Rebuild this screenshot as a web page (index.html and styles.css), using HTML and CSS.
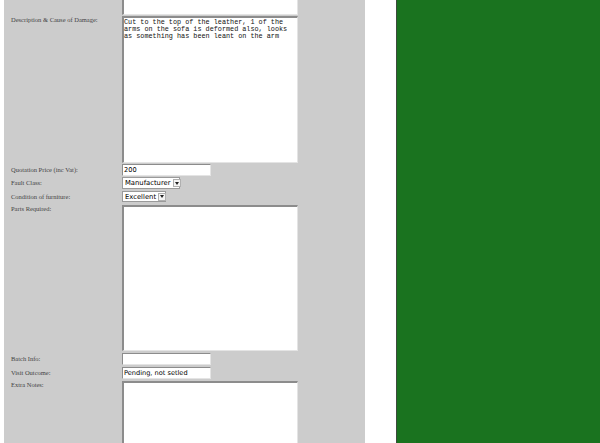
FILE: index.html
```html
<!DOCTYPE html>
<html>
<head>
<meta charset="utf-8">
<link rel="stylesheet" href="styles.css">
</head>
<body>
<div class="page">
  <div class="panel">
    <div class="row r-top">
      <div class="label"></div>
      <div class="area area-top"></div>
    </div>
    <div class="row r-gap1">
      <div class="label label-top">Description &amp; Cause of Damage:</div>
      <div class="area area-desc">Cut to the top of the leather, 1 of the
arms on the sofa is deformed also, looks
as something has been leant on the arm</div>
    </div>
    <div class="row r-gap1">
      <div class="label">Quotation Price (inc Vat):</div>
      <div class="input">200</div>
    </div>
    <div class="row">
      <div class="label">Fault Class:</div>
      <div class="select sel-fault"><span class="sel-text">Manufacturer</span><span class="sel-btn"><span class="tri"></span></span></div>
    </div>
    <div class="row">
      <div class="label">Condition of furniture:</div>
      <div class="select sel-cond"><span class="sel-text">Excellent</span><span class="sel-btn"><span class="tri"></span></span></div>
    </div>
    <div class="row">
      <div class="label label-top">Parts Required:</div>
      <div class="area area-parts"></div>
    </div>
    <div class="row">
      <div class="label">Batch Info:</div>
      <div class="input"></div>
    </div>
    <div class="row">
      <div class="label">Visit Outcome:</div>
      <div class="input">Pending, not setled</div>
    </div>
    <div class="row">
      <div class="label label-top">Extra Notes:</div>
      <div class="area area-notes"></div>
    </div>
  </div>
  <div class="spacer"></div>
  <div class="green"></div>
</div>
</body>
</html>
```

FILE: styles.css
```css
html, body {
  margin: 0;
  padding: 0;
  background: #ffffff;
  height: 443px;
  overflow: hidden;
}

.page {
  display: flex;
  height: 443px;
  padding-left: 4px;
  overflow: hidden;
}

.panel {
  width: 361px;
  flex: none;
  background: #cccccc;
  display: flex;
  flex-direction: column;
  overflow: hidden;
}

.spacer {
  width: 31px;
  flex: none;
  background: #ffffff;
}

.green {
  flex: 1;
  background: #1a731f;
  border-left: 1px solid #3d4a3d;
}

.row {
  display: flex;
  align-items: flex-start;
  margin-bottom: 2px;
  flex: none;
}

.r-top {
  margin-bottom: 1px;
}

.r-gap1 {
  margin-bottom: 1px;
}

.label {
  width: 111px;
  flex: none;
  padding-left: 7px;
  font-family: "Liberation Serif", "Times New Roman", serif;
  font-size: 6.5px;
  color: #444444;
  line-height: 12px;
  white-space: nowrap;
}

.label-top {
  line-height: 8px;
}

.area {
  box-sizing: border-box;
  width: 176px;
  background: #ffffff;
  border-top: 2px solid #8c8c8c;
  border-left: 2px solid #8c8c8c;
  border-right: 1px solid #e4e4e4;
  border-bottom: 1px solid #e4e4e4;
  font-family: "Liberation Mono", "Courier New", monospace;
  font-size: 6.8px;
  line-height: 7px;
  color: #111111;
  white-space: pre;
  padding: 1px 0 0 0;
}

.area-top {
  height: 15px;
  border-top: none;
}

.area-desc {
  height: 147px;
}

.area-parts {
  height: 146px;
}

.area-notes {
  height: 100px;
}

.input {
  box-sizing: border-box;
  width: 89px;
  height: 12px;
  background: #ffffff;
  border-top: 1px solid #8c8c8c;
  border-left: 1px solid #8c8c8c;
  border-right: 1px solid #e4e4e4;
  border-bottom: 1px solid #e4e4e4;
  font-family: "DejaVu Sans", "Liberation Sans", sans-serif;
  font-size: 6.6px;
  line-height: 10px;
  color: #000000;
  padding-left: 1px;
  white-space: nowrap;
}

.select {
  box-sizing: border-box;
  height: 12px;
  display: flex;
  align-items: center;
  background: #ffffff;
  border: 1px solid #9a9a9a;
  font-family: "DejaVu Sans", "Liberation Sans", sans-serif;
  font-size: 6.8px;
  color: #000000;
  padding-left: 2px;
  padding-right: 1px;
  gap: 2px;
}

.sel-fault {
  width: 58px;
}

.sel-cond {
  width: 44px;
  height: 11px;
}

.sel-text {
  flex: 1;
  white-space: nowrap;
  line-height: 10px;
}

.sel-btn {
  box-sizing: border-box;
  width: 8px;
  height: 8px;
  border: 1px solid #b0b0b0;
  background: #f4f4f4;
  display: flex;
  align-items: center;
  justify-content: center;
  flex: none;
}

.tri {
  width: 0;
  height: 0;
  border-left: 2px solid transparent;
  border-right: 2px solid transparent;
  border-top: 3px solid #222222;
}
```
